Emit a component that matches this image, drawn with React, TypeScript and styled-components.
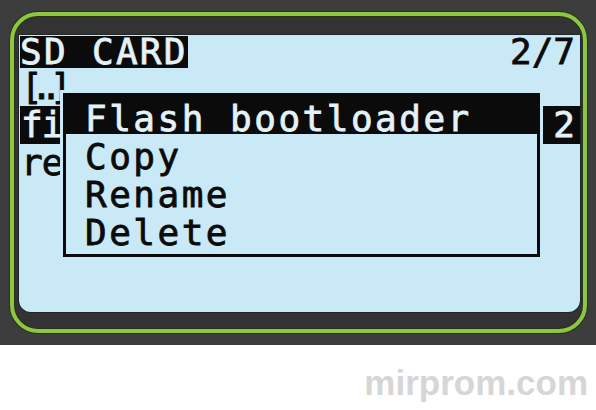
import React from "react";
import styled, { createGlobalStyle } from "styled-components";

const LCD_BG = "#c9e9f6";
const INK = "#0b0b0b";
const INK_LIGHT = "#e4f2f8";

const GlobalStyle = createGlobalStyle`
	html, body {
		margin: 0;
		padding: 0;
		background: #ffffff;
	}
	body {
		width: 596px;
		height: 410px;
		overflow: hidden;
	}
`;

const Page = styled.div`
	width: 596px;
	height: 410px;
	display: flex;
	flex-direction: column;
`;

const Frame = styled.div`
	height: 345px;
	box-sizing: border-box;
	padding: 12px 9px 12px 10px;
	background: #3d3d3d;
`;

const Bezel = styled.div`
	height: 100%;
	box-sizing: border-box;
	border: 4px solid #8dc63f;
	border-radius: 28px;
	background: #333333;
	padding: 19px 3px 17px 5px;
	box-shadow: 0 0 0 1px #26301c, inset 0 0 0 1px #28321d;
`;

const Screen = styled.div`
	position: relative;
	height: 100%;
	background: ${LCD_BG};
	border-radius: 0 0 12px 12px;
	box-shadow: 0 0 0 1px #1d272c;
	font-family: "DejaVu Sans Mono", "Liberation Mono", monospace;
	font-size: 36px;
	-webkit-text-stroke: 0.8px currentColor;
	color: ${INK};
	overflow: hidden;
`;

const Header = styled.div`
	display: flex;
	justify-content: space-between;
	align-items: flex-start;
	height: 32px;
	padding: 1px 5px 0 1px;
`;

const Title = styled.span`
	background: ${INK};
	color: ${INK_LIGHT};
	line-height: 32px;
	letter-spacing: 2.3px;
`;

const Counter = styled.span`
	line-height: 32px;
`;

const FileList = styled.div`
	display: flex;
	flex-direction: column;
`;

const FileRow = styled.div<{ $selected?: boolean; $squeeze?: boolean }>`
	display: flex;
	justify-content: space-between;
	height: 38px;
	line-height: 38px;
	margin-left: 1px;
	padding: 0 6px 0 1px;
	white-space: nowrap;
	letter-spacing: ${(p) => (p.$squeeze ? "-12px" : "-1px")};
	background: ${(p) => (p.$selected ? INK : "transparent")};
	color: ${(p) => (p.$selected ? INK_LIGHT : INK)};
`;

const Menu = styled.div`
	position: absolute;
	left: 44px;
	top: 58px;
	width: 477px;
	box-sizing: border-box;
	border: 3px solid ${INK};
	background: ${LCD_BG};
	padding-bottom: 6px;
	box-shadow: 0 0 0 3px ${LCD_BG};
`;

const MenuItem = styled.div<{ $active?: boolean }>`
	height: 38px;
	box-sizing: border-box;
	padding: 7px 0 0 19px;
	line-height: 32px;
	letter-spacing: 2.5px;
	white-space: nowrap;
	background: ${(p) => (p.$active ? INK : "transparent")};
	color: ${(p) => (p.$active ? INK_LIGHT : INK)};
`;

const Footer = styled.div`
	flex: 1;
	display: flex;
	justify-content: flex-end;
	padding: 18px 8px 0 0;
`;

const Watermark = styled.span`
	font-family: "Liberation Sans", Arial, sans-serif;
	font-weight: 700;
	font-size: 35px;
	color: #d6d6d6;
`;

const menuItems = ["Flash bootloader", "Copy", "Rename", "Delete"];

function App() {
	return (
		<Page>
			<GlobalStyle />
			<Frame>
				<Bezel>
					<Screen>
						<Header>
							<Title>SD CARD</Title>
							<Counter>2/7</Counter>
						</Header>
						<FileList>
							<FileRow $squeeze>
								<span>[..]</span>
							</FileRow>
							<FileRow $selected>
								<span>firmware.bin</span>
								<span>2</span>
							</FileRow>
							<FileRow>
								<span>readme.txt</span>
							</FileRow>
						</FileList>
						<Menu>
							{menuItems.map((item, i) => (
								<MenuItem key={item} $active={i === 0}>
									{item}
								</MenuItem>
							))}
						</Menu>
					</Screen>
				</Bezel>
			</Frame>
			<Footer>
				<Watermark>mirprom.com</Watermark>
			</Footer>
		</Page>
	);
}

export default App;
